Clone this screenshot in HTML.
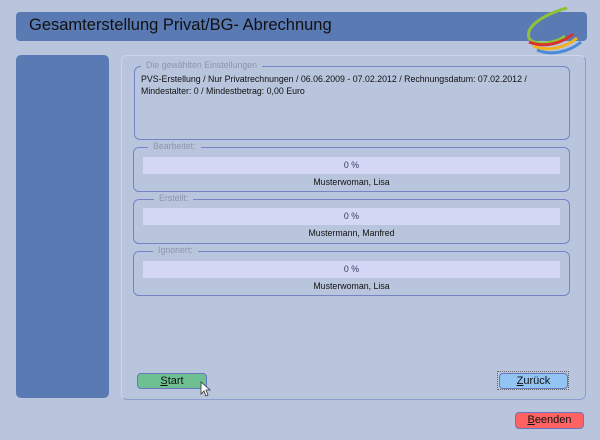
<!DOCTYPE html>
<html><head><meta charset="utf-8"><style>
body{margin:0;width:600px;height:440px;background:#b8c5dd;font-family:"Liberation Sans",Arial,sans-serif;position:relative;overflow:hidden;font-size:10px;color:#111}
.a{position:absolute}
.hdr{left:16px;top:12px;width:571px;height:29px;background:#5a7ab4;border-radius:4px}
.title{left:29px;top:16px;font-family:"Liberation Sans",sans-serif;font-size:16.5px;color:#111}
.lp{left:16px;top:55px;width:93px;height:343px;background:#5a7ab4;border-radius:5px}
.mp{left:121px;top:55px;width:463px;height:343px;border:1px solid #8c9ed0;border-top-color:#cdd6ea;border-left-color:#cdd6ea;border-radius:6px}
.fs{border:1px solid #7684c4;border-radius:6px;box-sizing:border-box}
.lg{background:#b8c5dd;color:#8d96a8;padding:0 5px;font-size:8.8px}
.bar{background:#d4d8f5;height:17px;text-align:center;line-height:17px;color:#333a60;font-size:8.8px}
.nm{text-align:center;font-size:8.8px}
.btn{border:1px solid #6677bb;border-radius:4px;text-align:center;font-size:11px;line-height:14px;box-sizing:border-box}
</style></head><body>
<div class="a hdr"></div>
<div class="a title">Gesamterstellung Privat/BG- Abrechnung</div>
<svg class="a" style="left:515px;top:4px" width="72" height="54" viewBox="0 0 72 54">
<path d="M52 4 C30 10 10 22 14 34 C18 42 40 40 50 32" fill="none" stroke="#8fc23a" stroke-width="3"/>
<path d="M14 38 C28 44 46 40 58 30" fill="none" stroke="#d93030" stroke-width="3"/>
<path d="M18 42 C32 48 50 44 62 34" fill="none" stroke="#f0b020" stroke-width="3"/>
<path d="M22 46 C36 52 54 48 66 38" fill="none" stroke="#4a8ad8" stroke-width="3"/>
</svg>
<div class="a lp"></div>
<div class="a mp"></div>
<div class="a fs" style="left:134px;top:66px;width:436px;height:74px"></div>
<div class="a lg" style="left:141px;top:60px">Die gewählten Einstellungen</div>
<div class="a" style="left:141px;top:73px;line-height:12px;font-size:8.8px">PVS-Erstellung / Nur Privatrechnungen / 06.06.2009 - 07.02.2012 / Rechnungsdatum: 07.02.2012 /<br>Mindestalter: 0 / Mindestbetrag: 0,00 Euro</div>

<div class="a fs" style="left:133px;top:147px;width:437px;height:45px"></div>
<div class="a lg" style="left:148px;top:141px">Bearbeitet:</div>
<div class="a bar" style="left:143px;top:157px;width:417px">0 %</div>
<div class="a nm" style="left:143px;top:177px;width:417px">Musterwoman, Lisa</div>

<div class="a fs" style="left:133px;top:199px;width:437px;height:45px"></div>
<div class="a lg" style="left:154px;top:193px">Erstellt:</div>
<div class="a bar" style="left:143px;top:208px;width:417px">0 %</div>
<div class="a nm" style="left:143px;top:228px;width:417px">Mustermann, Manfred</div>

<div class="a fs" style="left:133px;top:251px;width:437px;height:45px"></div>
<div class="a lg" style="left:153px;top:245px">Ignoriert:</div>
<div class="a bar" style="left:143px;top:261px;width:417px">0 %</div>
<div class="a nm" style="left:143px;top:281px;width:417px">Musterwoman, Lisa</div>

<div class="a btn" style="left:137px;top:373px;width:70px;height:16px;background:#6ec092"><u>S</u>tart</div>
<svg class="a" style="left:200px;top:381px" width="12" height="16" viewBox="0 0 12 16"><path d="M1 1 L1 13 L4 10 L6 15 L8 14 L6 9 L10 9 Z" fill="#fff" stroke="#333" stroke-width="0.8"/></svg>
<div class="a" style="left:497px;top:371px;width:72px;height:19px;border:1px dotted #666;box-sizing:border-box"></div>
<div class="a btn" style="left:499px;top:373px;width:69px;height:16px;background:#92c5f4"><u>Z</u>urück</div>
<div class="a btn" style="left:515px;top:412px;width:69px;height:17px;background:#fe6262;line-height:15px"><u>B</u>eenden</div>
</body></html>
